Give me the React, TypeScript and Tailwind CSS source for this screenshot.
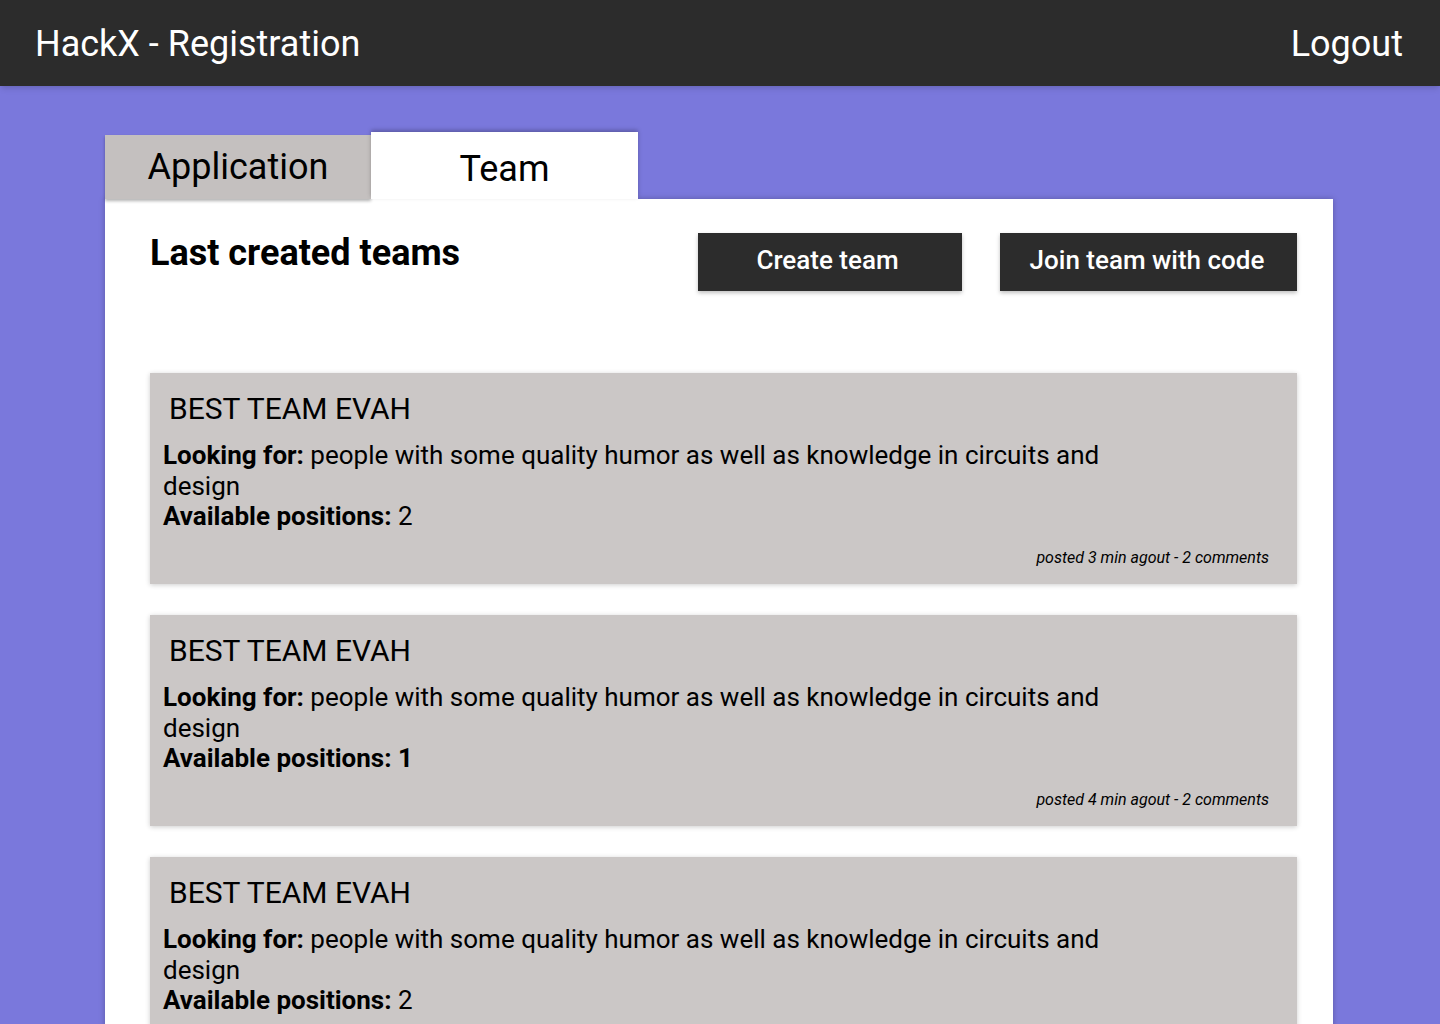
import React from "react";

const teams = [
  { positions: "2", boldNum: false, posted: "posted 3 min agout - 2 comments" },
  { positions: "1", boldNum: true, posted: "posted 4 min agout - 2 comments" },
  { positions: "2", boldNum: false, posted: "posted 5 min agout - 2 comments" },
];

export default function App() {
  return (
    <div className="h-[1024px] bg-[#7a78dc] font-['Roboto',sans-serif] text-black overflow-hidden">
      <header className="h-[86px] bg-[#2c2c2c] flex items-center justify-between pl-[35px] pr-[37px] pt-[2px] shadow-md">
        <div className="text-white text-[36px] leading-none">HackX - Registration</div>
        <div className="text-white text-[36px] leading-none">Logout</div>
      </header>

      <div className="pl-[105px] pr-[107px] pt-[46px]">
        <div className="flex items-end">
          <div className="w-[266px] h-[64px] bg-[#c4c0bf] flex items-center justify-center text-[36px] shadow-[0_2px_3px_rgba(0,0,0,0.3)]">
            Application
          </div>
          <div className="w-[267px] h-[67px] bg-white flex items-center justify-center text-[36px] pt-[6px] shadow-[0_-2px_4px_rgba(0,0,0,0.25)]">
            Team
          </div>
        </div>
        <div className="bg-white min-h-[900px] pl-[45px] pr-[36px] pt-[34px] shadow-[0_0_6px_rgba(0,0,0,0.25)]">
          <div className="flex items-start justify-between">
            <h1 className="text-[36px] font-bold leading-[40px]">Last created teams</h1>
            <div className="flex gap-[38px] pl-[1px]">
              <button className="w-[264px] h-[58px] bg-[#2c2c2c] text-white text-[26px] font-medium leading-none pb-[4px] pr-[5px] shadow-[0_2px_4px_rgba(0,0,0,0.25)]">
                Create team
              </button>
              <button className="w-[297px] h-[58px] bg-[#2c2c2c] text-white text-[26px] font-medium leading-none pb-[4px] pr-[3px] shadow-[0_2px_4px_rgba(0,0,0,0.25)]">
                Join team with code
              </button>
            </div>
          </div>

          <div className="mt-[82px] flex flex-col gap-[31px]">
            {teams.map((t, i) => (
              <div key={i} className="bg-[#cbc7c6] h-[211px] pt-[17px] pl-[13px] pr-[28px] shadow-[0_1px_5px_rgba(0,0,0,0.2)] flex flex-col">
                <div className="text-[30px] leading-[38px] pl-[6px]">BEST TEAM EVAH</div>
                <div className="text-[26px] leading-[30.5px] mt-[12px] max-w-[960px]">
                  <span className="font-bold">Looking for:</span> people with some quality humor as well as knowledge in circuits and design
                </div>
                <div className="text-[26px] leading-[30.5px]">
                  <span className="font-bold">Available positions:</span>{" "}
                  <span className={t.boldNum ? "font-bold" : ""}>{t.positions}</span>
                </div>
                <div className="text-right italic text-[16px] leading-[20px] mt-[16px]">{t.posted}</div>
              </div>
            ))}
          </div>
        </div>
      </div>
    </div>
  );
}
